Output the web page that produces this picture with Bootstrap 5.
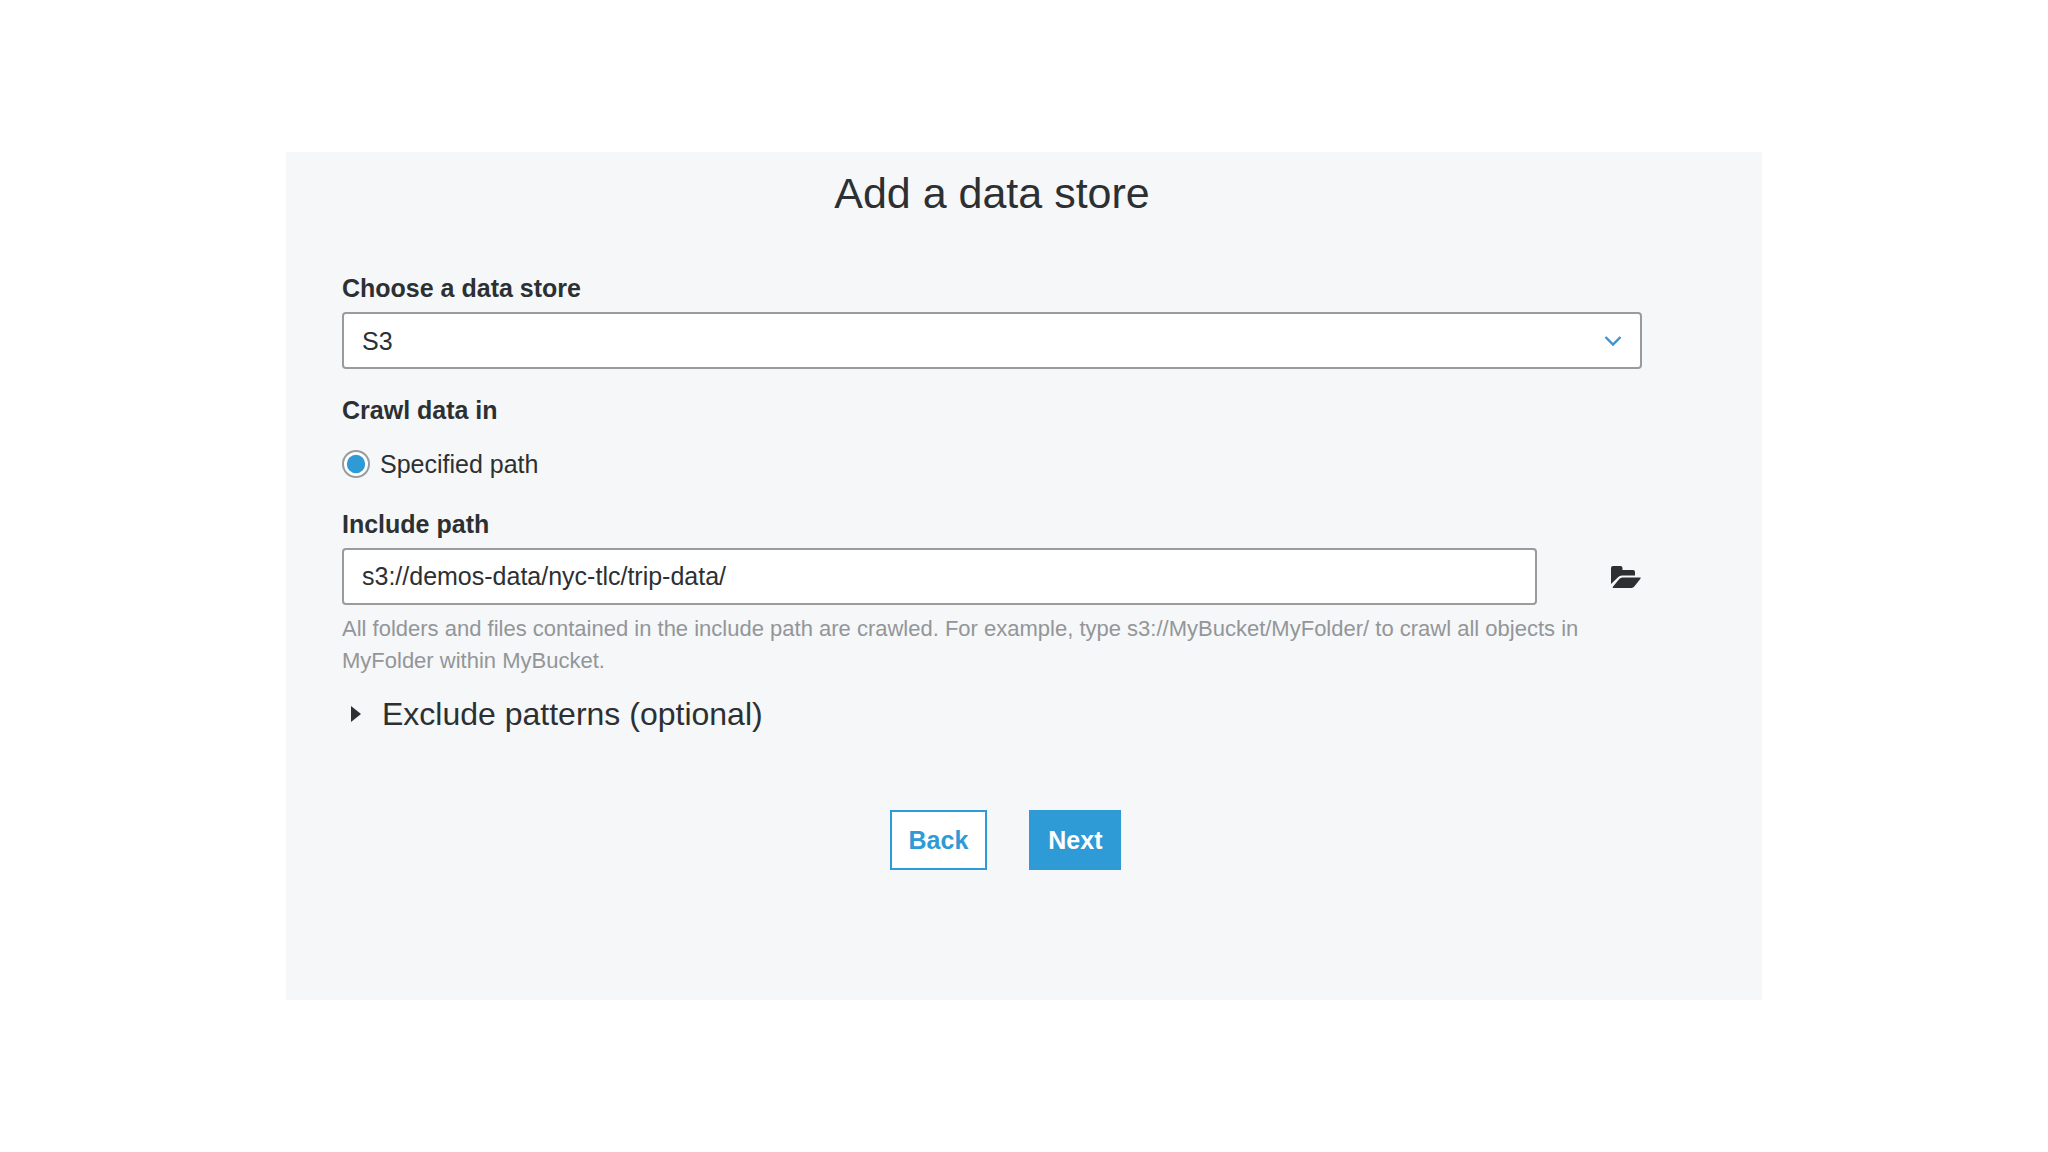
<!DOCTYPE html>
<html lang="en">
<head>
<meta charset="utf-8">
<meta name="viewport" content="width=device-width, initial-scale=1">
<title>Add a data store</title>
<link rel="stylesheet" href="https://cdn.jsdelivr.net/npm/bootstrap@5.3.0/dist/css/bootstrap.min.css">
<style>
  :root { --ink: #2d3033; --accent: #2e9ad6; --line: #999b9d; }
  body { font-family: "Liberation Sans", Arial, sans-serif; font-size: 25px; line-height: 30px; color: var(--ink); background: #fff; }
  .wizard-panel { margin: 152px 286px; padding: 15px 120px 130px 56px; background: #f5f7f8; }
  .wizard-title { font-size: 43px; line-height: 52px; margin-bottom: 54px; }
  .field-label { display: block; font-size: 25px; line-height: 30px; font-weight: 700; margin-bottom: 9px; }
  .field-box, .field-box:focus { height: 57px; padding: 0 18px; font-size: 25px; line-height: 30px; color: var(--ink); background-color: #fff; border: 2px solid var(--line); border-radius: 4px; }
  .store-select { background-image: url("data:image/svg+xml,%3Csvg xmlns='http://www.w3.org/2000/svg' viewBox='0 0 18 12'%3E%3Cpath d='M1.5 2 9 9.5 16.5 2' fill='none' stroke='%233a93d6' stroke-width='2.4'/%3E%3C/svg%3E"); background-size: 18px 12px; background-position: right 18px center; }
  .crawl-group { margin: 26px 0 30px; }
  .crawl-group .field-label { margin-bottom: 24px; }
  .crawl-option { gap: 10px; }
  .path-radio.form-check-input { width: 28px; height: 28px; border: 2px solid var(--line); background-color: #fff; }
  .path-radio.form-check-input:checked { border-color: var(--line); background-color: #fff; background-size: 100% 100%; background-image: url("data:image/svg+xml,%3Csvg xmlns='http://www.w3.org/2000/svg' viewBox='0 0 24 24'%3E%3Ccircle cx='12' cy='12' r='9.2' fill='%232e9ad6'/%3E%3C/svg%3E"); }
  .path-row { gap: 74px; }
  .help-text { font-size: 22px; line-height: 32px; color: #939699; margin: 8px 0 17px; }
  .exclude-toggle, .exclude-toggle:hover { font-size: 32px; line-height: 40px; gap: 21px; padding-left: 9px; color: var(--ink); }
  .wizard-actions { gap: 42px; margin-top: 76px; padding-left: 27px; }
  .wizard-actions .btn { --bs-btn-border-radius: 0; font-size: 25px; line-height: 30px; font-weight: 700; padding: 13px 17px; border: 2px solid var(--accent); }
  .btn-back { color: var(--accent); background: #fff; }
  .btn-next { color: #fff; background: var(--accent); }
</style>
</head>
<body>
<main class="wizard-panel">
  <form>
    <h1 class="wizard-title text-center fw-normal mt-0">Add a data store</h1>

    <label class="field-label" for="store">Choose a data store</label>
    <select id="store" class="form-select field-box store-select">
      <option selected>S3</option>
    </select>

    <fieldset class="crawl-group">
      <legend class="field-label">Crawl data in</legend>
      <div class="crawl-option d-flex align-items-center">
        <input class="form-check-input path-radio m-0" type="radio" name="crawl" id="crawl-path" checked>
        <label for="crawl-path">Specified path</label>
      </div>
    </fieldset>

    <label class="field-label" for="path">Include path</label>
    <div class="d-flex align-items-center path-row">
      <input id="path" type="text" class="form-control field-box" value="s3://demos-data/nyc-tlc/trip-data/" aria-describedby="path-help">
      <button type="button" class="btn p-0 border-0 lh-1 d-flex flex-shrink-0" aria-label="Browse folders">
        <svg width="31" height="24" viewBox="0 0 31 24" fill="#2d3033" aria-hidden="true">
          <path d="M0 19V3Q0 1 2 1H9.500Q11.500 1 11.500 3V5H22Q24 5 24 7V10.500H11Q8.500 10.500 7 12.300Z"/>
          <path d="M11.500 12.500H29Q30.300 12.500 29.400 13.800L23.300 21.600Q22.300 23 20.500 23H2.300Q1 23 1.900 21.700L8.300 14Q9.500 12.500 11.500 12.500Z"/>
        </svg>
      </button>
    </div>
    <p id="path-help" class="help-text">All folders and files contained in the include path are crawled. For example, type s3://MyBucket/MyFolder/ to crawl all objects in MyFolder within MyBucket.</p>

    <button type="button" class="exclude-toggle btn border-0 rounded-0 py-0 pe-0 d-flex align-items-center" aria-expanded="false">
      <svg width="10" height="16" viewBox="0 0 10 16" fill="#2d3033" aria-hidden="true"><path d="M0 0 10 8 0 16Z"/></svg>
      Exclude patterns (optional)
    </button>

    <div class="wizard-actions d-flex justify-content-center">
      <button type="button" class="btn btn-back">Back</button>
      <button type="submit" class="btn btn-next">Next</button>
    </div>
  </form>
</main>
<script src="https://cdn.jsdelivr.net/npm/bootstrap@5.3.0/dist/js/bootstrap.bundle.min.js"></script>
</body>
</html>
